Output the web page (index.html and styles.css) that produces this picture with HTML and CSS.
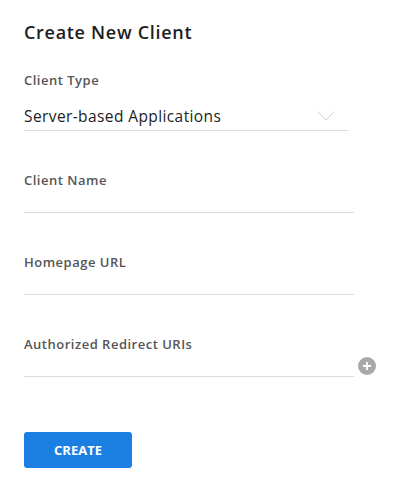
FILE: index.html
```html
<!DOCTYPE html>
<html lang="en">
<head>
<meta charset="utf-8">
<title>Create New Client</title>
<link rel="stylesheet" href="styles.css">
</head>
<body>
<main class="page">
  <h1 class="title">Create New Client</h1>
  <form class="form">
    <div class="field">
      <label class="label">Client Type</label>
      <div class="select">
        <span class="select-value">Server-based Applications</span>
        <svg class="chevron" width="18" height="10" viewBox="0 0 18 10"><polyline points="0.5,0.5 9,9 17.5,0.5" fill="none" stroke="#d0d0d0" stroke-width="1"/></svg>
      </div>
    </div>
    <div class="field">
      <label class="label">Client Name</label>
      <div class="input"></div>
    </div>
    <div class="field">
      <label class="label">Homepage URL</label>
      <div class="input"></div>
    </div>
    <div class="field">
      <label class="label">Authorized Redirect URIs</label>
      <div class="input-row">
        <div class="input"></div>
        <svg class="add" width="18" height="18" viewBox="0 0 18 18"><circle cx="9" cy="9" r="9" fill="#a9a9a9"/><path d="M9 5v8M5 9h8" stroke="#fff" stroke-width="2"/></svg>
      </div>
    </div>
    <button type="button" class="btn">CREATE</button>
  </form>
</main>
</body>
</html>
```
FILE: styles.css
```css
html, body {
  margin: 0;
  padding: 0;
  background: #fff;
}
body {
  font-family: "Open Sans", "Liberation Sans", sans-serif;
  color: #222;
}
.page {
  padding: 20px 24px 0 24px;
}
.title {
  margin: 0;
  font-size: 18px;
  line-height: 24px;
  font-weight: 600;
  letter-spacing: 0.7px;
  color: #1e1e1e;
}
.form {
  display: flex;
  flex-direction: column;
  margin-top: 28px;
}
.field {
  display: flex;
  flex-direction: column;
  margin-bottom: 41px;
}
.label {
  font-size: 13px;
  line-height: 16px;
  font-weight: 600;
  letter-spacing: 0.5px;
  color: #555;
}
.select {
  width: 324px;
  height: 43px;
  box-sizing: border-box;
  border-bottom: 1px solid #dcdcdc;
  display: flex;
  align-items: flex-end;
  justify-content: space-between;
  padding-bottom: 4px;
}
.select-value {
  font-size: 15.5px;
  line-height: 20px;
  letter-spacing: 0.4px;
  color: #222;
}
.chevron {
  margin-right: 13px;
  margin-bottom: 5px;
}
.input {
  width: 330px;
  height: 25px;
  box-sizing: border-box;
  border-bottom: 1px solid #dcdcdc;
}
.input-row {
  display: flex;
  align-items: flex-end;
}
.add {
  margin-left: 4px;
  margin-bottom: 2px;
}
.btn {
  align-self: flex-start;
  margin-top: 14px;
  width: 108px;
  height: 36px;
  border: none;
  border-radius: 3px;
  background: #1a7fe0;
  color: #fff;
  font-family: "Open Sans", "Liberation Sans", sans-serif;
  font-size: 13px;
  font-weight: 700;
  padding: 0;
}
```
